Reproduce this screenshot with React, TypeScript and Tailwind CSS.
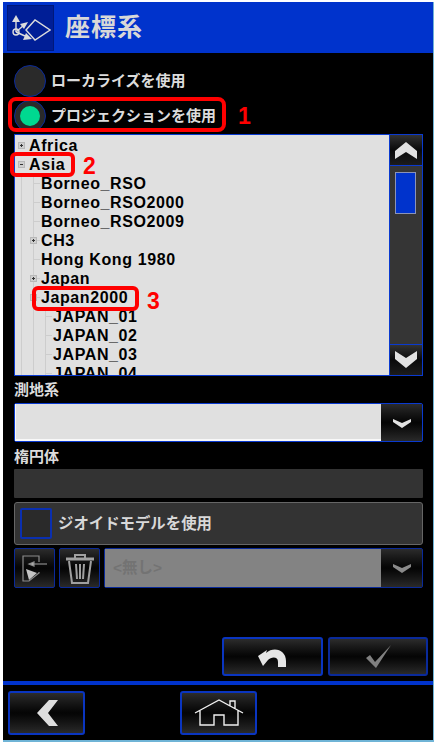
const font = { fontFamily: '"Liberation Sans", "Noto Sans CJK JP", sans-serif' };

const tree: { label: string; indent: number; box?: "plus" | "minus" }[] = [
  { label: "Africa", indent: 0, box: "plus" },
  { label: "Asia", indent: 0, box: "minus" },
  { label: "Borneo_RSO", indent: 1 },
  { label: "Borneo_RSO2000", indent: 1 },
  { label: "Borneo_RSO2009", indent: 1 },
  { label: "CH3", indent: 1, box: "plus" },
  { label: "Hong Kong 1980", indent: 1 },
  { label: "Japan", indent: 1, box: "plus" },
  { label: "Japan2000", indent: 1, box: "minus" },
  { label: "JAPAN_01", indent: 2 },
  { label: "JAPAN_02", indent: 2 },
  { label: "JAPAN_03", indent: 2 },
  { label: "JAPAN_04", indent: 2 },
];

const glossy = "bg-gradient-to-b from-[#2c2c2c] via-[#050505] to-[#2a2a2a]";

function Callout({ n, className }: { n: string; className: string }) {
  return <span className={`absolute text-[#ff0000] text-[23px] font-bold leading-none ${className}`}>{n}</span>;
}

function Chevron({ up, size = "big", dim }: { up?: boolean; size?: "big" | "small"; dim?: boolean }) {
  const big = size === "big";
  return (
    <svg width={big ? 22 : 18} height={big ? 18 : 10} viewBox={big ? "0 0 22 18" : "0 0 18 10"} className={up ? "rotate-180" : ""}>
      {big
        ? <path d="M0 0 L11 7 L22 0 V8 L11 17 L0 8 Z" fill="#e2e2e2" />
        : <path d="M0 1 L9 5 L18 1 V4 L9 10 L0 4 Z" fill={dim ? "#8a8a8a" : "#e2e2e2"} />}
    </svg>
  );
}

function BarButton({ className, children }: { className: string; children: React.ReactNode }) {
  return <div className={`h-[39px] rounded-[3px] border-2 flex items-center justify-center ${glossy} ${className}`}>{children}</div>;
}

function TreeRow({ label, indent, box }: { label: string; indent: number; box?: "plus" | "minus" }) {
  return (
    <div className="h-[19px] flex items-center relative text-[16px] tracking-[0.6px] font-bold text-black leading-none whitespace-nowrap">
      {indent >= 1 && <span className="absolute left-[6px] top-0 bottom-0 w-px bg-[#cdcdcd]" />}
      {indent >= 1 && <span className="absolute left-[18px] top-0 bottom-0 w-px bg-[#cdcdcd]" />}
      {indent === 2 && <span className="absolute left-[30px] top-0 bottom-0 w-px bg-[#cdcdcd]" />}
      {indent === 1 && <span className="absolute left-[18px] top-[9px] w-[7px] h-px bg-[#cdcdcd]" />}
      {indent === 2 && <span className="absolute left-[30px] top-[9px] w-[7px] h-px bg-[#cdcdcd]" />}
      {box && (
        <span className={`absolute ${indent === 0 ? "left-[3px]" : "left-[15px]"} top-[6px] w-[7px] h-[7px] bg-[#cfcfcf] border border-[#b8b8b8] flex items-center justify-center`}>
          <span className="w-[3px] h-px bg-[#333] relative">
            {box === "plus" && <span className="absolute left-px -top-px w-px h-[3px] bg-[#333]" />}
          </span>
        </span>
      )}
      <span className={indent === 0 ? "ml-[14px]" : indent === 1 ? "ml-[26px]" : "ml-[38px]"}>{label}</span>
    </div>
  );
}

export default function App() {
  return (
    <div className="w-[436px] h-[745px] bg-white overflow-hidden" style={font}>
      <div className="w-[431px] h-[740px] ml-[3px] mt-[2px] bg-black flex flex-col relative border-r border-b-2 border-[#6fb4d6]">
        {/* header */}
        <div className="h-[51px] bg-[#0033cc] flex items-center pl-[4px] gap-[11px] shrink-0">
          <div className="w-[47px] h-[46px] bg-[#001e96] border border-[#00187a] flex items-center justify-center">
            <svg width="40" height="34" viewBox="0 0 40 34" fill="none" stroke="#dcdcdc" strokeWidth="1.4">
              <path d="M15 19 L24 9 L39 19 L24 29 Z" />
              <path d="M5 21 V10" />
              <path d="M5 4 L1 11 H9 Z" fill="#dcdcdc" stroke="none" />
              <path d="M5 21 L14 25" />
              <path d="M21 28 L12 29 L15 22 Z" fill="#dcdcdc" stroke="none" />
              <path d="M5 21 L13 14" />
              <path d="M17 11 L9 13 L13 18 Z" fill="#dcdcdc" stroke="none" />
              <circle cx="5" cy="21" r="3" />
            </svg>
          </div>
          <span className="text-[#d8d8d8] text-[25px] font-bold tracking-[1px] leading-none">座標系</span>
        </div>

        {/* radios */}
        <div className="flex items-center gap-[5px] mt-[12px] ml-[11px] h-[32px]">
          <div className="w-[32px] h-[32px] rounded-full bg-[#2a2a2a] border border-[#0a2a9a]" />
          <span className="text-[#dcdcdc] text-[15px] font-bold">ローカライズを使用</span>
        </div>
        <div className="flex items-center gap-[5px] mt-[3px] ml-[11px] h-[32px] relative">
          <div className="absolute -left-[6px] -top-[3px] w-[218px] h-[35px] border-[4px] border-[#ff0000] rounded-[8px]" />
          <div className="w-[32px] h-[32px] rounded-full bg-[#2a2a2a] border border-[#0a2a9a] flex items-center justify-center">
            <div className="w-[20px] h-[20px] rounded-full bg-[#00d890]" />
          </div>
          <span className="text-[#dcdcdc] text-[15px] font-bold">プロジェクションを使用</span>
          <Callout n="1" className="left-[224px] top-[5px]" />
        </div>

        {/* tree list */}
        <div className="mt-[2px] ml-[11px] w-[409px] h-[242px] border border-[#0a3ad0] flex relative shrink-0">
          <div className="w-[374px] bg-[#e0e0e0] overflow-hidden pt-[1px]">
            {tree.map((row) => <TreeRow key={row.label} {...row} />)}
          </div>
          <div className="flex-1 bg-[#353535] flex flex-col border-l border-[#0a3ad0]">
            <div className="h-[31px] flex items-center justify-center border-b border-[#0a3ad0] bg-gradient-to-b from-[#333] via-[#0a0a0a] to-[#1c1c1c]">
              <Chevron up />
            </div>
            <div className="flex-1 px-[5px] pt-[6px]">
              <div className="w-[21px] h-[42px] bg-[#0033cc] border border-[#8a93b8]" />
            </div>
            <div className="h-[31px] flex items-center justify-center border-t border-[#0a3ad0] bg-gradient-to-b from-[#333] via-[#0a0a0a] to-[#1c1c1c]">
              <Chevron />
            </div>
          </div>
          <div className="absolute left-[-5px] top-[17px] w-[65px] h-[25px] border-[4px] border-[#ff0000] rounded-[6px]" />
          <Callout n="2" className="left-[68px] top-[20px]" />
          <div className="absolute left-[17px] top-[151px] w-[107px] h-[25px] border-[4px] border-[#ff0000] rounded-[6px]" />
          <Callout n="3" className="left-[132px] top-[155px]" />
        </div>

        {/* datum */}
        <div className="ml-[11px] mt-[4px] text-[#dcdcdc] text-[15px] font-bold leading-[20px]">測地系</div>
        <div className="ml-[11px] mt-[3px] w-[409px] h-[39px] border border-[#0a3ad0] rounded-[2px] flex shrink-0">
          <div className="flex-1 bg-[#e0e0e0] border-b-2 border-l border-[#f8f8f8]" />
          <div className={`w-[41px] flex items-center justify-center ${glossy}`}>
            <Chevron size="small" />
          </div>
        </div>

        {/* ellipsoid */}
        <div className="ml-[11px] mt-[5px] text-[#dcdcdc] text-[15px] font-bold leading-[20px]">楕円体</div>
        <div className="ml-[11px] mt-[2px] w-[409px] h-[29px] bg-[#333333] rounded-[1px] shrink-0" />

        {/* geoid */}
        <div className="ml-[11px] mt-[4px] w-[409px] h-[43px] bg-[#333333] border border-[#666] rounded-[3px] flex items-center pl-[5px] gap-[6px] shrink-0">
          <div className="w-[32px] h-[31px] rounded-[2px] border-2 border-[#0a2fb0] bg-[#2a2a2a]" />
          <span className="text-[#d8d8d8] text-[15.4px] font-bold">ジオイドモデルを使用</span>
        </div>

        {/* file row */}
        <div className="ml-[11px] mt-[3px] w-[409px] h-[40px] flex gap-[4px] shrink-0">
          <div className={`w-[41px] rounded-[2px] border border-[#0a2a9a] flex items-center justify-center ${glossy}`}>
            <svg width="25" height="27" viewBox="0 0 25 27" fill="none" stroke="#8c8c8c" strokeWidth="1.2">
              <path d="M17 7 V1 H1 V26 H7 L17 18 V17" />
              <path d="M10 9 H25" />
              <path d="M7 9 L12 7 V11 Z" fill="#b0b0b0" />
              <path d="M4 14 L15 18 L7 25 Z" fill="#c4c4c4" stroke="none" />
            </svg>
          </div>
          <div className={`w-[41px] rounded-[2px] border border-[#0a2a9a] flex items-center justify-center ${glossy}`}>
            <svg width="28" height="31" viewBox="0 0 28 31" fill="none" stroke="#a0a0a0">
              <path d="M0 5 H28 V7 H0 Z" fill="#a0a0a0" />
              <path d="M9 5 V2 H19 V5" strokeWidth="2" />
              <path d="M3 8 L6 30 H22 L25 8" strokeWidth="2" />
              <path d="M10 11 L11 26 M14 11 V26 M18 11 L17 26" strokeWidth="2" />
            </svg>
          </div>
          <div className="flex-1 border border-[#0a2a9a] rounded-[2px] flex">
            <div className="flex-1 bg-[#838383] flex items-center pl-[8px] text-[#737373] text-[15.5px] font-bold">&lt;無し&gt;</div>
            <div className={`w-[41px] flex items-center justify-center ${glossy}`}>
              <Chevron size="small" dim />
            </div>
          </div>
        </div>

        {/* action buttons */}
        <div className="mt-auto">
          <div className="flex justify-end gap-[5px] mr-[5px] mb-[5px]">
            <BarButton className="w-[101px] border-[#0a35c0]">
              <svg width="29" height="20" viewBox="0 0 29 20">
                <path d="M9 3 L0 9 L5 19 L10 13 C13 10 20 9 20 15 V20 H28 V14 C28 3 16 -1 8 6 Z" fill="#e6e6e6" />
              </svg>
            </BarButton>
            <BarButton className="w-[100px] border-[#0a2a9a]">
              <svg width="25" height="23" viewBox="0 0 25 23">
                <path d="M0 13 L4 10 L9 17 L25 0 L10 23 Z" fill="#808080" />
              </svg>
            </BarButton>
          </div>
          <div className="h-[4px] bg-[#0033cc]" />
          <div className="flex h-[55px] items-center pl-[5px]">
            <div className={`w-[77px] h-[44px] rounded-[3px] border-2 border-[#0a35c0] flex items-center justify-center ${glossy}`}>
              <svg width="22" height="26" viewBox="0 0 22 26" className="ml-[2px]">
                <path d="M21 0 H12 L0 13 L12 26 H21 L11 13 Z" fill="#dedede" />
              </svg>
            </div>
            <div className={`ml-[95px] w-[77px] h-[44px] rounded-[3px] border-2 border-[#0a35c0] flex items-center justify-center ${glossy}`}>
              <svg width="50" height="27" viewBox="0 0 50 27" fill="none" stroke="#f0f0f0" strokeWidth="1.4">
                <path d="M1 14 L25 1 L49 14 M36 7 V2 H41 V10 M6 11 V26 H20 V16 H30 V26 H44 V11" />
              </svg>
            </div>
          </div>
        </div>
      </div>
    </div>
  );
}
